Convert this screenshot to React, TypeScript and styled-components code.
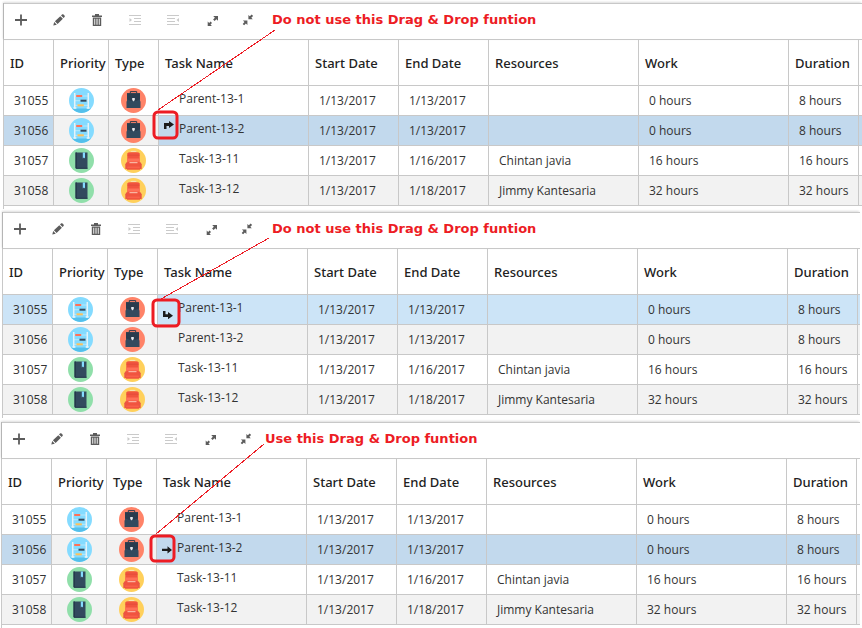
import React from "react";
import styled, { createGlobalStyle, css } from "styled-components";

const GlobalStyle = createGlobalStyle`
  *, *::before, *::after { box-sizing: border-box; }
  body { margin: 0; background: #fff; font-family: "Open Sans", "Noto Sans", sans-serif; }
`;

const LINE = "#c8c8c8";
const RED = "#ed1c24";

const Page = styled.main`
  display: flex;
  flex-direction: column;
  padding-top: 3px;
  overflow: hidden;
`;

const Panel = styled.section<{ $left: number; $right: number; $top: number }>`
  position: relative;
  margin: ${(p) => p.$top}px ${(p) => p.$right}px 0 ${(p) => p.$left}px;
  padding-bottom: 3px;
  border-left: 1px solid ${LINE};
`;

const Toolbar = styled.div`
  display: flex;
  align-items: center;
  height: 37px;
  padding-bottom: 3px;
  border-top: 1px solid ${LINE};
  border-bottom: 1px solid ${LINE};
  box-shadow: -1px -1px 2px rgba(0, 0, 0, 0.14);
`;

const Tools = styled.div`
  display: flex;
  align-items: center;
  gap: 4px;
`;

const ResizeTools = styled.div`
  display: flex;
  align-items: center;
  gap: 1px;
  margin-left: 6px;
`;

const ToolButton = styled.button`
  display: flex;
  align-items: center;
  justify-content: center;
  width: 34px;
  height: 30px;
  padding: 0;
  border: 0;
  background: none;
  color: #5c5c5c;
  &:disabled { color: #cacaca; }
  svg { display: block; }
`;

const Note = styled.strong<{ $gap: number }>`
  margin-left: ${(p) => p.$gap}px;
  color: ${RED};
  font: bold 13px/16px "DejaVu Sans", sans-serif;
  white-space: nowrap;
`;

const Grid = styled.table`
  width: 100%;
  table-layout: fixed;
  border-collapse: separate;
  border-spacing: 0;
`;

const Col = styled.col<{ $w?: number }>`
  ${(p) => p.$w && css`width: ${p.$w}px;`}
`;

const Head = styled.th`
  height: 46px;
  padding: 0 0 0 6px;
  border-right: 1px solid ${LINE};
  border-bottom: 1px solid ${LINE};
  color: #222;
  font-family: "Noto Sans", "Open Sans", sans-serif;
  font-size: 13px;
  line-height: 20px;
  font-weight: 500;
  text-align: left;
  white-space: nowrap;
  &:last-child { border-right: 0; padding: 0; }
`;

const Row = styled.tr<{ $fill: string }>`
  background: ${(p) => p.$fill};
`;

const Cell = styled.td`
  height: 30px;
  padding: 0 0 0 10px;
  border-right: 1px solid ${LINE};
  border-bottom: 1px solid ${LINE};
  color: #333;
  font-size: 12px;
  line-height: 16px;
  white-space: nowrap;
  &:last-child { border-right: 0; padding: 0; }
`;

const IconCell = styled(Cell)<{ $fill: string }>`
  padding: 0;
  background: ${(p) => p.$fill};
  svg { display: block; margin: 0 auto; }
`;

const TaskCell = styled(Cell)`
  padding: 0;
`;

const Task = styled.div`
  display: flex;
  align-items: center;
  height: 29px;
  padding-bottom: 3px;
`;

const DropSlot = styled.span<{ $place: Place }>`
  display: flex;
  align-self: stretch;
  align-items: ${(p) => ({ above: "flex-start", below: "flex-end", inside: "center" })[p.$place]};
  flex: 0 0 20px;
  padding: ${(p) => ({ above: "5px 0 0 5px", below: "0 0 2px 5px", inside: "4px 0 0 5px" })[p.$place]};
`;

const Callout = styled.svg`
  position: absolute;
  top: 0;
  left: 0;
  pointer-events: none;
  overflow: visible;
`;

type Place = "above" | "below" | "inside";

const AddIcon = () => (
  <svg width="12" height="12" viewBox="0 0 12 12">
    <path d="M6 .5v11M0 6h12" stroke="currentColor" strokeWidth="1.8" fill="none" />
  </svg>
);
const PencilIcon = () => (
  <svg width="12" height="12" viewBox="0 0 12 12" fill="currentColor">
    <path d="M.3 11.5l.9-3.4 2.6 2.6zM1.9 7.3l5.400-5.100 2.600 2.600-5.300 5.300zM8 1.500l1-.9c.5-.4 1-.4 1.500 0l1 1c.5.5.5 1 0 1.500l-.9.9z" />
  </svg>
);
const TrashIcon = () => (
  <svg width="12" height="12" viewBox="0 0 12 12" fill="currentColor" fillRule="evenodd">
    <path d="M4 0h4v1.400h3v1.700H1V1.400h3zM1.800 3.600h8.400V12H1.800zM3.300 4.800v5.900h.9V4.800zm2.200 0v5.900h1V4.800zm2.300 0v5.900h.9V4.800z" />
  </svg>
);
const IndentIcon = () => (
  <svg width="12" height="12" viewBox="0 0 12 12" fill="currentColor" shapeRendering="crispEdges">
    <path d="M0 1h12v1H0zM5 4h7v1H5zM5 7h7v1H5zM0 10h12v1H0z" />
    <path d="M.5 4L3 6 .5 8z" shapeRendering="auto" />
  </svg>
);
const OutdentIcon = () => (
  <svg width="12" height="12" viewBox="0 0 12 12" fill="currentColor" shapeRendering="crispEdges">
    <path d="M0 1h12v1H0zM0 4h8v1H0zM0 7h8v1H0zM0 10h12v1H0z" />
    <path d="M12 4L9.500 6 12 8z" shapeRendering="auto" />
  </svg>
);
const ExpandIcon = () => (
  <svg width="12" height="14" viewBox="0 -1 12 14" fill="currentColor">
    <path d="M6.200 2H11v4.800L9.400 5.200 7.600 7 6.100 5.500l1.800-1.800zM.7 7.500l1.400 1.400 1.500-1.500L5 8.900l-1.500 1.500 1.400 1.500H.7z" />
  </svg>
);
const CollapseIcon = () => (
  <svg width="12" height="12" viewBox="0 0 12 12" fill="currentColor">
    <path d="M6.400.9l1.400 1.400L9.700.5l1.400 1.400-1.800 1.800 1.500 1.500H6.400zM.9 6.500h4.500V11L3.900 9.500l-1.800 1.800L.7 9.900l1.800-1.800z" />
  </svg>
);

const Abacus = () => (
  <svg width="25" height="25" viewBox="0 0 25 25" role="img" aria-label="Normal priority">
    <circle cx="12.5" cy="12.5" r="12.5" fill="#84dbff" />
    <path d="M3 20.500h19a12.500 12.500 0 0 1-19 0z" fill="#54c0eb" />
    <path d="M6 8h13M6 12.700h13M6 17.300h13" stroke="#c3edfd" strokeWidth=".8" />
    <path d="M5.700 5v15.500M19.300 5v15.500" stroke="#e6f3f8" strokeWidth="1.500" />
    <path d="M4.400 20h3M17.700 20h3" stroke="#e6f3f8" strokeWidth="1.300" />
    <rect x="7.2" y="7" width="6" height="2" fill="#ff7058" />
    <rect x="11.5" y="11.7" width="6" height="2" fill="#324a5e" />
    <rect x="8.5" y="16.3" width="6.3" height="2" fill="#fdc15c" />
  </svg>
);
const Briefcase = () => (
  <svg width="25" height="25" viewBox="0 0 25 25" role="img" aria-label="Parent">
    <circle cx="12.5" cy="12.5" r="12.5" fill="#ff8368" />
    <path d="M9.300 5.500V3.600h6.400v1.900" fill="none" stroke="#2b3c4e" strokeWidth="1" />
    <path d="M6 5.200h13v7.500l.5 1V20h-14v-6.300l.5-1z" fill="#324a5e" />
    <path d="M6 5.200h13v6l-4 1.800h-5l-4-1.800z" fill="#293b4d" />
    <path d="M11.200 10h2.600v2l-1.300 1.500-1.300-1.500z" fill="#e6e9ee" />
  </svg>
);
const Book = () => (
  <svg width="25" height="25" viewBox="0 0 25 25" role="img" aria-label="Low priority">
    <circle cx="12.5" cy="12.5" r="12.5" fill="#90dfaa" />
    <path d="M6.500 4.500h12v16.300H7.200l-.7-.8z" fill="#324a5e" />
    <path d="M6.500 4.500h1.500v15.200h10.500v1.100H7.200l-.7-.8z" fill="#25394b" />
    <path d="M13.800 4.500h2.200v6l-1.100-1-1.100 1z" fill="#84dbff" />
  </svg>
);
const Backpack = () => (
  <svg width="25" height="25" viewBox="0 0 25 25" role="img" aria-label="Task">
    <circle cx="12.5" cy="12.5" r="12.5" fill="#ffd05b" />
    <path d="M9 4.600l1.200-1.200h4.600L16 4.600" fill="none" stroke="#f4e6c0" />
    <path d="M5.500 14.200h14l1.200 2V21H4.300v-4.800z" fill="#e85743" />
    <path d="M6.300 5.200q1-1 2.500-1h7.400q1.500 0 2.500 1v9l.3 7.600H6l.3-7.600z" fill="#f1543f" />
    <path d="M6.300 7.200h12.400" stroke="#db4736" strokeWidth=".6" />
    <path d="M6.300 10.500h12.400v3.200H6.300z" fill="#ff7058" />
    <path d="M8.500 14.700h8" stroke="#fbcbb8" strokeWidth="1" />
    <path d="M6.200 19.200h12.600" stroke="#ff7058" strokeWidth=".7" />
  </svg>
);

const DropArrow = ({ place }: { place: Place }) => {
  const shapes: Record<Place, string> = {
    above: "M0 2h5V0l5 3.500-5 3.500V5H2.500v3H0z",
    below: "M0 0h2.500v3.300H5V1l5 3.700L5 8.200V6H0z",
    inside: "M0 2.700h5.500V.2L10 3.900 5.500 7.600V5.100H0z",
  };
  return (
    <svg width="10" height="8" viewBox="0 0 10 8" fill="#1c1c1c">
      <path d={shapes[place]} />
    </svg>
  );
};

const columns: [string, number][] = [
  ["ID", 50], ["Priority", 55], ["Type", 50], ["Task Name", 150], ["Start Date", 90],
  ["End Date", 90], ["Resources", 150], ["Work", 150], ["Duration", 70],
];

const rows = [
  { id: 31055, parent: true, name: "Parent-13-1", end: "1/13/2017", who: "", work: "0 hours", time: "8 hours" },
  { id: 31056, parent: true, name: "Parent-13-2", end: "1/13/2017", who: "", work: "0 hours", time: "8 hours" },
  { id: 31057, parent: false, name: "Task-13-11", end: "1/16/2017", who: "Chintan javia", work: "16 hours", time: "16 hours" },
  { id: 31058, parent: false, name: "Task-13-12", end: "1/18/2017", who: "Jimmy Kantesaria", work: "32 hours", time: "32 hours" },
];

type Example = {
  note: string;
  noteGap: number;
  place: Place;
  target: number;
  fill: string;
  left: number;
  right: number;
  top: number;
  line: string;
  box: { x: number; y: number; width: number; height: number };
};

const examples: Example[] = [
  {
    note: "Do not use this Drag & Drop funtion", noteGap: 7, place: "above", target: 31056, fill: "#c2d9ed",
    left: 3, right: 0, top: 0, line: "M271 27L154 107", box: { x: 150, y: 109, width: 23, height: 26 },
  },
  {
    note: "Do not use this Drag & Drop funtion", noteGap: 8, place: "below", target: 31055, fill: "#cce4f7",
    left: 2, right: 2, top: 3, line: "M266 26L158 87", box: { x: 150, y: 88, width: 26, height: 26 },
  },
  {
    note: "Use this Drag & Drop funtion", noteGap: 2, place: "inside", target: 31056, fill: "#c2d9ed",
    left: 1, right: 2, top: 4, line: "M262 22L154 112", box: { x: 149, y: 114, width: 23, height: 25 },
  },
];

const TaskGrid = ({ example }: { example: Example }) => (
  <Grid>
    <colgroup>
      {columns.map(([name, w]) => <Col key={name} $w={w} />)}
      <Col />
    </colgroup>
    <thead>
      <tr>
        {columns.map(([name]) => <Head key={name} scope="col">{name}</Head>)}
        <Head as="td" />
      </tr>
    </thead>
    <tbody>
      {rows.map((r, i) => {
        const base = i % 2 ? "#f2f2f2" : "#fff";
        const active = r.id === example.target;
        return (
          <Row key={r.id} $fill={active ? example.fill : base}>
            <Cell>{r.id}</Cell>
            <IconCell $fill={base}>{r.parent ? <Abacus /> : <Book />}</IconCell>
            <IconCell $fill={base}>{r.parent ? <Briefcase /> : <Backpack />}</IconCell>
            <TaskCell>
              <Task>
                <DropSlot $place={example.place}>{active && <DropArrow place={example.place} />}</DropSlot>
                {r.name}
              </Task>
            </TaskCell>
            <Cell>1/13/2017</Cell>
            <Cell>{r.end}</Cell>
            <Cell>{r.who}</Cell>
            <Cell>{r.work}</Cell>
            <Cell>{r.time}</Cell>
            <Cell />
          </Row>
        );
      })}
    </tbody>
  </Grid>
);

export default function App() {
  return (
    <>
      <GlobalStyle />
      <Page>
        {examples.map((ex) => (
          <Panel key={ex.place} $left={ex.left} $right={ex.right} $top={ex.top}>
            <Toolbar>
              <Tools>
                <ToolButton aria-label="Add"><AddIcon /></ToolButton>
                <ToolButton aria-label="Edit"><PencilIcon /></ToolButton>
                <ToolButton aria-label="Delete"><TrashIcon /></ToolButton>
                <ToolButton aria-label="Indent" disabled><IndentIcon /></ToolButton>
                <ToolButton aria-label="Outdent" disabled><OutdentIcon /></ToolButton>
              </Tools>
              <ResizeTools>
                <ToolButton aria-label="Expand all"><ExpandIcon /></ToolButton>
                <ToolButton aria-label="Collapse all"><CollapseIcon /></ToolButton>
              </ResizeTools>
              <Note $gap={ex.noteGap}>{ex.note}</Note>
            </Toolbar>
            <TaskGrid example={ex} />
            <Callout width="280" height="150" fill="none" stroke={RED} aria-hidden="true">
              <path d={ex.line} shapeRendering="crispEdges" />
              <rect {...ex.box} rx="4" strokeWidth="3" />
            </Callout>
          </Panel>
        ))}
      </Page>
    </>
  );
}
